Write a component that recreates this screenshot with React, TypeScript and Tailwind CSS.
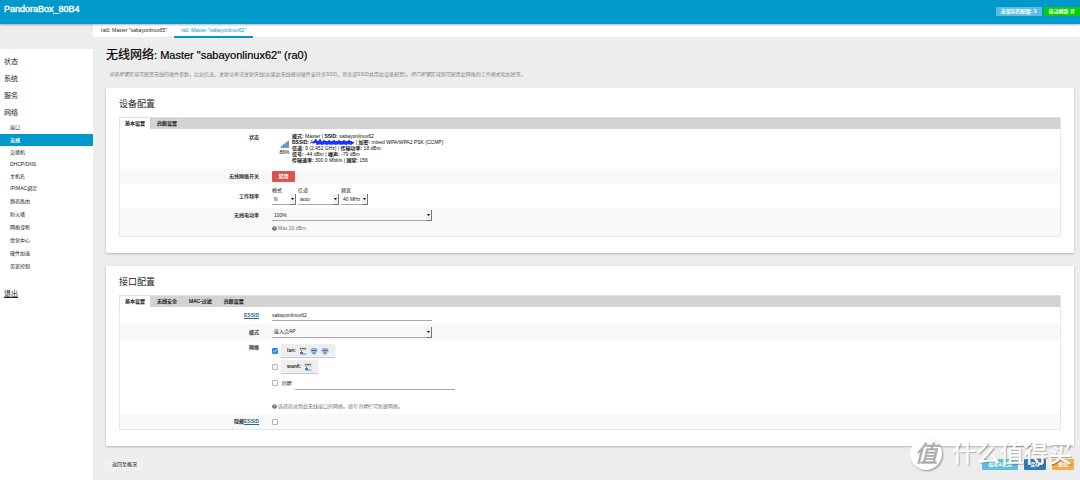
import type { ReactNode } from 'react'

const menu = ['状态', '系统', '服务', '网络']

const subMenu = [
  { name: '接口', tall: false },
  { name: '无线', tall: false },
  { name: '交换机', tall: false },
  { name: 'DHCP/DNS', tall: false },
  { name: '主机名', tall: false },
  { name: 'IP/MAC绑定', tall: true },
  { name: '静态路由', tall: true },
  { name: '防火墙', tall: true },
  { name: '网络诊断', tall: true },
  { name: '优化中心', tall: true },
  { name: '硬件加速', tall: true },
  { name: '带宽控制', tall: true },
]

function Header() {
  return (
    <header className="relative z-10 flex h-6 items-start justify-between bg-[#0099cc] shadow-[0_1px_2px_rgba(0,0,0,0.3)]">
      <a href="#" className="pl-1 pt-1 text-[9px] leading-[10px] text-white [-webkit-text-stroke:0.4px_white]">PandoraBox_80B4</a>
      <div className="flex gap-0.5 pt-[7px] font-bold text-white">
        <a href="#" className="rounded-[1px] bg-[#5bc0de] px-[5px] leading-[9px]">未保存的配置: 3</a>
        <a href="#" className="rounded-l-[1px] bg-[#06cf06] px-[5px] leading-[9px]">自动刷新 开</a>
      </div>
    </header>
  )
}

function Sidebar() {
  return (
    <nav className="mt-[25px] w-[93px] shrink-0 bg-white pt-1 text-[#222]">
      {menu.map((m) => (
        <a key={m} href="#" className="block pl-1 text-[7px] leading-[17px]">{m}</a>
      ))}
      <ul>
        {subMenu.map((s) => (
          <li key={s.name}>
            <a
              href="#"
              className={`block pl-2.5 ${s.tall ? 'leading-[13px]' : 'leading-3'} ${
                s.name === '无线' ? 'mt-px bg-[#0099cc] font-bold text-white' : ''
              }`}
            >
              {s.name}
            </a>
          </li>
        ))}
      </ul>
      <a href="#" className="mt-3 block pl-1 text-[7px] leading-[17px] underline">退出</a>
    </nav>
  )
}

function Card({ title, tabs, children }: { title: string; tabs: string[]; children: ReactNode }) {
  return (
    <section className="bg-white px-[13px] pb-4 pt-2.5 shadow-[0_1px_2px_rgba(0,0,0,0.25)]">
      <h3 className="mb-1.5 text-[9px] leading-[13px] text-[#222]">{title}</h3>
      <div className="flex h-3 gap-0.5 border border-b-0 border-[#e0e0e0] bg-[#d3d3d3]">
        {tabs.map((t, i) => (
          <button
            key={t}
            type="button"
            className={`px-[5px] text-[#222] [-webkit-text-stroke:0.2px_#222] ${i === 0 ? 'bg-white' : ''}`}
          >
            {t}
          </button>
        ))}
      </div>
      <div className="border border-t-0 border-[#e8e8e8]">{children}</div>
    </section>
  )
}

function Row({ label, className, children }: { label: ReactNode; className: string; children: ReactNode }) {
  return (
    <div className={`grid grid-cols-[139px_1fr] gap-[13px] ${className}`}>
      <div className="text-right font-bold leading-[7px] text-[#333]">{label}</div>
      <div>{children}</div>
    </div>
  )
}

function Select({ id, value, className }: { id: string; value: string; className: string }) {
  return (
    <div className={`relative h-[11px] ${className}`}>
      <select
        id={id}
        defaultValue={value}
        className="block h-full w-full appearance-none border-b border-[#aaa] bg-transparent pl-0.5 text-[#222] outline-none"
      >
        <option>{value}</option>
      </select>
      <span className="pointer-events-none absolute bottom-0 right-0 top-0 flex w-1.5 items-center justify-center border-b border-r border-[#777] bg-[#f1f1f1]">
        <svg width="3" height="2" viewBox="0 0 3 2">
          <path d="M0 0h3L1.5 2z" fill="#000" />
        </svg>
      </span>
    </div>
  )
}

function Check({ id, label, checked }: { id: string; label?: string; checked?: boolean }) {
  return (
    <span className="relative flex h-1.5 w-1.5 shrink-0">
      <input
        id={id}
        type="checkbox"
        aria-label={label}
        defaultChecked={checked}
        className="h-1.5 w-1.5 appearance-none rounded-[1px] border border-[#b5b5b5] bg-white checked:border-[#2a86f3] checked:bg-[#2a86f3]"
      />
      {checked && (
        <svg className="pointer-events-none absolute inset-0" width="6" height="6" viewBox="0 0 6 6">
          <path d="M1.4 3.1l1.1 1.1 2-2.6" fill="none" stroke="#fff" strokeWidth="0.9" />
        </svg>
      )}
    </span>
  )
}

function Help({ children }: { children: ReactNode }) {
  return (
    <p className="flex items-center gap-px leading-[7px] text-[#777]">
      <svg width="5" height="5" viewBox="0 0 16 16">
        <circle cx="8" cy="8" r="7.5" fill="#666" />
        <path d="M5.5 6.2c0-3.4 5.2-3.2 5.2-.3 0 2-2.6 1.8-2.6 3.8M8.1 11v2" fill="none" stroke="#fff" strokeWidth="1.8" />
      </svg>
      <span>{children}</span>
    </p>
  )
}

function SwitchIcon() {
  return (
    <svg width="8" height="8" viewBox="0 0 16 16">
      <rect x="1" y="1" width="14" height="6" fill="#c5c8b4" />
      <path d="M2 3h3M6.5 3h3M11 3h3" stroke="#555a48" strokeWidth="2" />
      <path d="M5 7v3.500M3 14h12" stroke="#5b8cc9" strokeWidth="2" />
      <rect x="2" y="10" width="6" height="4" fill="#3f78bf" />
    </svg>
  )
}

function WifiIcon() {
  return (
    <svg width="8" height="8" viewBox="0 0 16 16">
      <ellipse cx="8" cy="7" rx="7.500" ry="5.500" fill="#a9c4e2" />
      <path d="M2 5.500c3-3.500 9-3.500 12 0" fill="none" stroke="#7fa5d0" strokeWidth="1.500" />
      <path d="M3 7h10" stroke="#3e6a9e" strokeWidth="2.500" />
      <path d="M4 11h8l-1.500 3.500h-5z" fill="#5f8fc8" />
    </svg>
  )
}

function DeviceCard() {
  return (
    <Card title="设备配置" tabs={['基本设置', '高级设置']}>
      <Row label="状态" className="h-10 pt-[5px]">
        <div className="-mt-[2px] flex gap-[3px] pl-2">
          <div className="flex w-[9px] flex-col items-center pt-2">
            <svg width="8" height="8" viewBox="0 0 8 8">
              <path d="M0 8V6l2-1v3zM2 8V4.500l2-1V8zM4 8V3l2-1v6zM6 8V1.500L8 .3V8z" fill="#6899c9" />
            </svg>
            <span className="mt-px leading-[6px]">86%</span>
          </div>
          <div className="pt-px leading-[6px] text-[#111]">
            <p><b>模式:</b> Master | <b>SSID:</b> sabayonlinux62</p>
            <p className="flex whitespace-pre">
              <b>BSSID:</b> A
              <svg className="-ml-px" width="42" height="6" viewBox="0 0 42 6">
                <path
                  d="M1 4l3-3 1 4 3-4 2 4 2-3 3 3 2-3 2 3 3-3 2 3 3-3 2 3 3-3 2 3 3-3 2 3 3-2M2 3h38M5 4.500h35"
                  fill="none"
                  stroke="#1a35ff"
                  strokeWidth="1.800"
                />
              </svg>
              {' | '}<b>加密:</b>{' mixed WPA/WPA2 PSK (CCMP)'}
            </p>
            <p><b>信道:</b> 9 (2.452 GHz) | <b>传输功率:</b> 18 dBm</p>
            <p><b>信号:</b> -44 dBm | <b>噪声:</b> -79 dBm</p>
            <p><b>传输速率:</b> 300.0 Mbit/s | <b>国家:</b> 156</p>
          </div>
        </div>
      </Row>
      <Row label="无线网络开关" className="h-[15px] items-center bg-[#f8f8f8]">
        <button type="button" className="block h-[11px] w-[23px] rounded-[1px] bg-[#d9534f] font-bold text-white">禁用</button>
      </Row>
      <Row label="工作频率" className="h-6 items-center">
        <div className="flex gap-0.5 leading-[7px] text-[#222]">
          <div className="w-6">
            <label htmlFor="mode">模式</label>
            <Select id="mode" value="N" className="w-full" />
          </div>
          <div className="w-[41px]">
            <label htmlFor="channel">信道</label>
            <Select id="channel" value="auto" className="w-full" />
          </div>
          <div className="w-[27px]">
            <label htmlFor="bandwidth">频宽</label>
            <Select id="bandwidth" value="40 MHz" className="w-full" />
          </div>
        </div>
      </Row>
      <Row label={<label htmlFor="power">无线电功率</label>} className="h-7 bg-[#f8f8f8] pt-1">
        <div className="-mt-[2px]">
          <Select id="power" value="100%" className="mb-1 w-40" />
          <Help>Max 20 dBm</Help>
        </div>
      </Row>
    </Card>
  )
}

function InterfaceCard() {
  return (
    <Card title="接口配置" tabs={['基本设置', '无线安全', 'MAC-过滤', '高级设置']}>
      <Row
        label={<label htmlFor="essid" className="text-[#2b6d8c] underline">ESSID</label>}
        className="h-[17px] items-center"
      >
        <input
          id="essid"
          type="text"
          defaultValue="sabayonlinux62"
          className="block h-[11px] w-40 border-b border-[#aaa] bg-transparent text-[#222] outline-none"
        />
      </Row>
      <Row label={<label htmlFor="if-mode">模式</label>} className="h-4 items-center bg-[#f8f8f8]">
        <Select id="if-mode" value="接入点AP" className="w-40" />
      </Row>
      <Row label="网络" className="h-[74px] pt-1">
        <div className="flex flex-col gap-[3px]">
          <div className="flex items-center gap-[3px]">
            <Check id="net-lan" checked />
            <label htmlFor="net-lan" className="flex h-[13px] items-center gap-[3px] bg-[#eee] px-1.5 font-bold text-[#333] shadow-[0_1px_1px_rgba(0,0,0,0.2)]">
              lan: <SwitchIcon /> <WifiIcon /> <WifiIcon />
            </label>
          </div>
          <div className="flex items-center gap-[3px]">
            <Check id="net-wan6" />
            <label htmlFor="net-wan6" className="flex h-[13px] items-center gap-[3px] bg-[#eee] px-1.5 font-bold text-[#333] shadow-[0_1px_1px_rgba(0,0,0,0.2)]">
              wan6: <SwitchIcon />
            </label>
          </div>
          <div className="flex h-[14px] items-center gap-[3px]">
            <Check id="net-new" />
            <label htmlFor="net-new" className="italic text-[#222]">创建:</label>
            <input type="text" aria-label="创建" className="h-full w-40 border-b border-[#aaa] bg-transparent outline-none" />
          </div>
        </div>
        <div className="mt-[13px]">
          <Help>选择指派到此无线接口的网络。填写<i>创建</i>栏可新建网络。</Help>
        </div>
      </Row>
      <Row
        label={<label htmlFor="hide">隐藏<span className="text-[#2b6d8c] underline">ESSID</span></label>}
        className="h-[15px] items-center bg-[#f8f8f8]"
      >
        <Check id="hide" />
      </Row>
    </Card>
  )
}

function Watermark() {
  return (
    <div className="pointer-events-none absolute bottom-2.5 right-2 flex items-center gap-2.5">
      <span className="flex h-8 w-8 items-center justify-center rounded-full bg-white text-[23px] italic leading-none text-[#aaa] shadow-[1px_1px_2px_rgba(0,0,0,0.4)] [-webkit-text-stroke:0.5px_#aaa]">
        值
      </span>
      <span className="text-[24px] leading-8 text-white [-webkit-text-stroke:0.5px_white] [text-shadow:1px_1px_1px_rgba(0,0,0,0.4)]">
        什么值得买
      </span>
    </div>
  )
}

export default function App() {
  return (
    <div className="relative flex min-h-screen flex-col bg-[#ededed] font-['Liberation_Sans','Noto_Sans_CJK_SC',sans-serif] text-[5px] leading-[7px] text-black">
      <Header />
      <div className="flex flex-1">
        <Sidebar />
        <main className="min-w-0 flex-1">
          <div className="flex h-[13px] bg-white pl-px leading-[13px] text-[#222]">
            <a href="#" className="px-[7px]">rai0: Master "sabayonlinux65"</a>
            <a href="#" className="h-[14px] border-b-2 border-[#0099cc] px-[7px] text-[#0099cc]">ra0: Master "sabayonlinux62"</a>
          </div>
          <div className="pl-[13px] pr-1.5">
            <h2 className="mt-[11px] text-[11px] leading-[14px] [-webkit-text-stroke:0.2px_black]">
              <span className="text-[12px]">无线网络</span>: Master "sabayonlinux62" (ra0)
            </h2>
            <p className="mb-2.5 mt-2 pl-[3px] leading-2 text-[#888]">
              <i>设备配置</i>区域可配置无线的硬件参数，比如信道、发射功率或发射天线(如果此无线模块硬件支持多SSID，则全部SSID共用此设备配置)。<i>接口配置</i>区域则可配置此网络的工作模式和加密等。
            </p>
            <div className="flex flex-col gap-[13px]">
              <DeviceCard />
              <InterfaceCard />
            </div>
            <footer className="mt-[13px] flex justify-between font-bold text-white">
              <button type="button" className="h-[11px] bg-[#f0f0f0] px-1.5 font-normal text-[#222]">返回至概况</button>
              <div className="flex gap-1.5">
                <button type="button" className="h-[11px] rounded-[1px] bg-[#5bc0de] px-1.5">保存&amp;应用</button>
                <button type="button" className="h-[11px] rounded-[1px] bg-[#337ab7] px-1.5">保存</button>
                <button type="button" className="h-[11px] rounded-[1px] bg-[#f0ad4e] px-1.5">复位</button>
              </div>
            </footer>
          </div>
        </main>
      </div>
      <Watermark />
    </div>
  )
}
